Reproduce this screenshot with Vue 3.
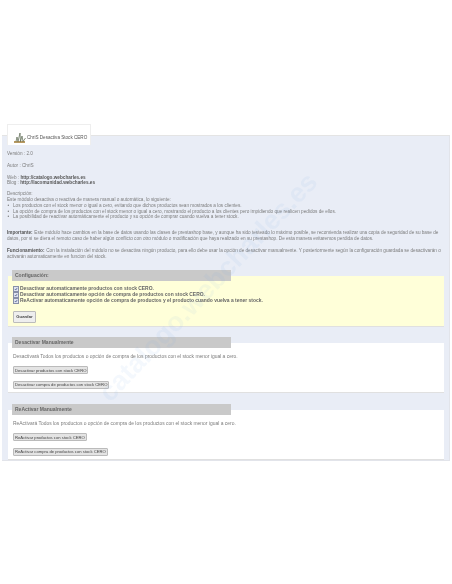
<script setup>
const bullets = [
  'Los productos con el stock menor o igual a cero, evitando que dichos productos sean mostrados a los clientes.',
  'La opción de compra de los productos con el stock menor o igual a cero, mostrando el producto a los clientes pero impidiendo que realicen pedidos de ellos.',
  'La posibilidad de reactivar automáticamente el producto y su opción de comprar cuando vuelva a tener stock.'
]
const checks = [
  'Desactivar automaticamente productos con stock CERO.',
  'Desactivar automaticamente opción de compra de productos con stock CERO.',
  'ReActivar automaticamente opción de compra de productos y el producto cuando vuelva a tener stock.'
]
</script>

<template>
  <div class="page">
    <div class="tab">
      <svg class="logo" viewBox="0 0 12 12" width="12" height="12">
        <rect x="0" y="9" width="11" height="2" fill="#b89a62" />
        <path d="M2 9.5 L3 5 L4 9.5 M4 9.5 L6 1 L6.5 9.5 M6.5 9.5 L8 4 L9 9.5 M9 9.5 L11.5 6" fill="none" stroke="#55634a" stroke-width="0.7" />
      </svg>
      <span>ChriS Desactiva Stock CERO</span>
    </div>
    <div class="panel">
      <p class="intro first">Versión : 2.0</p>
      <p class="intro">Autor : ChriS</p>
      <p class="intro web">Web : <b>http://catalogo.webcharles.es</b><br />Blog : <b>http://lacomunidad.webcharles.es</b></p>
      <div class="desc">
        <div>Descripción:</div>
        <div>Este módulo desactiva o reactiva de manera manual o automática, lo siguiente:</div>
        <ul>
          <li v-for="b in bullets" :key="b">{{ b }}</li>
        </ul>
      </div>
      <p class="para imp"><b>Importante:</b> Este módulo hace cambios en la base de datos usando las clases de prestashop base, y aunque ha sido testeado lo máximo posible, se recomienda realizar una copia de seguridad de su base de datos, por si se diera el remoto caso de haber algún conflicto con otro módulo o modificación que haya realizado en su prestashop. De esta manera evitaremos perdida de datos.</p>
      <p class="para func"><b>Funcionamiento:</b> Con la instalación del módulo no se desactiva ningún producto, para ello debe usar la opción de desactivar manualmente. Y posteriormente según la configuración guardada se desactivarán o activarán automaticamente en funcion del stock.</p>

      <section class="box yellow">
        <h3>Configuación:</h3>
        <label v-for="c in checks" :key="c" class="check">
          <span class="tick"><svg viewBox="0 0 5 5" width="4" height="4"><path d="M1 2.5 L2.2 3.8 L4 1.2" fill="none" stroke="#33457a" stroke-width="0.8" /></svg></span>
          {{ c }}
        </label>
        <button class="btn save">Guardar</button>
      </section>

      <section class="box">
        <h3>Desactivar Manualmente</h3>
        <p class="lead">Desactivará Todos los productos o opción de compra de los productos con el stock menor igual a cero.</p>
        <button class="btn">Desactivar productos con stock CERO</button>
        <button class="btn">Desactivar compra de productos con stock CERO</button>
      </section>

      <section class="box">
        <h3>ReActivar Manualmente</h3>
        <p class="lead">ReActivará Todos los productos o opción de compra de los productos con el stock menor igual a cero.</p>
        <button class="btn">ReActivar productos con stock CERO</button>
        <button class="btn">ReActivar compra de productos con stock CERO</button>
      </section>
      <div class="watermark">catalogo.webcharles.es</div>
    </div>
  </div>
</template>

<style>
html, body { margin: 0; background: #fff; }
</style>

<style scoped>
.page {
  width: 452px;
  height: 584px;
  box-sizing: border-box;
  padding: 124px 2px 0 2px;
  font-family: "Liberation Sans", Arial, sans-serif;
  font-size: 4.66px;
  line-height: 5.8px;
  color: #7c7c7c;
  overflow: hidden;
  filter: blur(0.3px);
}
.tab {
  position: relative;
  z-index: 2;
  display: flex;
  align-items: center;
  gap: 1px;
  width: 84px;
  height: 21px;
  box-sizing: border-box;
  margin: 0 0 -10px 5px;
  padding: 6px 0 0 6px;
  background: #fff;
  border: 1px solid #eee;
  border-bottom: 0;
  font-size: 4.6px;
  color: #555;
  white-space: nowrap;
}
.logo { flex: none; }
.panel {
  position: relative;
  height: 326px;
  box-sizing: border-box;
  padding: 15px 5px 0 5px;
  background: #e9edf6;
  border-top: 1px solid #e4e4e4;
  border-right: 1px solid #e2e4ea;
  border-bottom: 1px solid #e2e4ea;
  overflow: hidden;
}
.watermark {
  position: absolute;
  left: 46px;
  top: 135px;
  width: 320px;
  text-align: center;
  transform: rotate(-46.5deg);
  font-size: 27px;
  line-height: 32px;
  font-weight: 700;
  color: rgba(110, 165, 230, 0.08);
  white-space: nowrap;
  pointer-events: none;
}
.panel > p, .desc, .box { position: relative; }
p { margin: 0; }
.intro { margin-bottom: 6px; }
.web { margin-bottom: 5px; }
b { color: #555; }
.para b { margin-right: 0.4px; }
.desc { margin-bottom: 10px; }
ul { margin: 0; padding: 0 0 0 6px; list-style: none; }
li { position: relative; }
li::before {
  content: "•";
  position: absolute;
  left: -5.5px;
}
.para { width: 438px; }
.imp { margin-bottom: 6px; }
.func { margin-bottom: 17px; }
.box {
  height: 50px;
  box-sizing: border-box;
  margin: 0 0 17px 1px;
  width: 436px;
  padding: 11px 5px 0;
  background: #fff;
  border-bottom: 1px solid #e0e0e0;
}
.yellow { height: 51px; padding-top: 9px; margin-bottom: 16px; background: #ffffd9; }
h3 {
  position: absolute;
  left: 4px;
  top: -6px;
  width: 219px;
  height: 11px;
  box-sizing: border-box;
  margin: 0;
  padding-left: 3px;
  background: #c9c9c9;
  color: #666;
  font-size: 5px;
  line-height: 11px;
  font-weight: 700;
}
.check {
  display: flex;
  align-items: center;
  gap: 1px;
  height: 6.3px;
  font-size: 4.95px;
  font-weight: 700;
  color: #666;
  white-space: nowrap;
}
.tick {
  width: 4px;
  height: 4px;
  flex: none;
  display: flex;
  align-items: center;
  justify-content: center;
  background: #dfe3ef;
  border: 0.5px solid #8890a8;
}
.btn {
  display: block;
  height: 8px;
  margin: 0 0 6.5px;
  padding: 0 1px;
  background: #e4e4e4;
  border: 1px solid #bbb;
  border-radius: 1px;
  font-family: inherit;
  font-size: 4.2px;
  line-height: 5px;
  color: #444;
  white-space: nowrap;
}
.save {
  width: 23px;
  height: 12px;
  margin-top: 6.5px;
  padding: 0;
  background: #eee;
  font-weight: 700;
  text-align: center;
}
.lead { margin-bottom: 6.2px; font-size: 4.95px; }
</style>
